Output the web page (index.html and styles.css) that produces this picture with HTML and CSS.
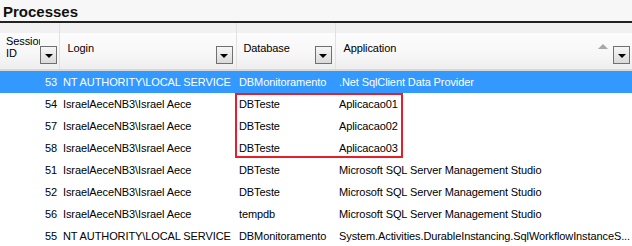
FILE: index.html
```html
<!DOCTYPE html>
<html lang="en">
<head>
    <meta charset="UTF-8">
    <title>Processes</title>
    <link rel="stylesheet" href="styles.css">
</head>
<body>
    <div class="panel">
        <div class="title">Processes</div>
        <div class="grid-wrap">
            <table class="grid">
                <colgroup>
                    <col class="c-session">
                    <col class="c-login">
                    <col class="c-db">
                    <col class="c-app">
                </colgroup>
                <thead>
                    <tr>
                        <th>
                            <div class="head-cell">
                                <span class="head-text session-text">Session ID</span>
                                <span class="drop"></span>
                            </div>
                        </th>
                        <th>
                            <div class="head-cell">
                                <span class="head-text">Login</span>
                                <span class="drop"></span>
                            </div>
                        </th>
                        <th>
                            <div class="head-cell">
                                <span class="head-text">Database</span>
                                <span class="drop"></span>
                            </div>
                        </th>
                        <th>
                            <div class="head-cell">
                                <span class="head-text">Application</span>
                                <span class="sort-up"></span>
                                <span class="drop"></span>
                            </div>
                        </th>
                    </tr>
                </thead>
                <tbody>
                    <tr class="selected">
                        <td class="num">53</td>
                        <td>NT AUTHORITY\LOCAL SERVICE</td>
                        <td>DBMonitoramento</td>
                        <td>.Net SqlClient Data Provider</td>
                    </tr>
                    <tr>
                        <td class="num">54</td>
                        <td>IsraelAeceNB3\Israel Aece</td>
                        <td>DBTeste</td>
                        <td>Aplicacao01</td>
                    </tr>
                    <tr>
                        <td class="num">57</td>
                        <td>IsraelAeceNB3\Israel Aece</td>
                        <td>DBTeste</td>
                        <td>Aplicacao02</td>
                    </tr>
                    <tr>
                        <td class="num">58</td>
                        <td>IsraelAeceNB3\Israel Aece</td>
                        <td>DBTeste</td>
                        <td>Aplicacao03</td>
                    </tr>
                    <tr>
                        <td class="num">51</td>
                        <td>IsraelAeceNB3\Israel Aece</td>
                        <td>DBTeste</td>
                        <td>Microsoft SQL Server Management Studio</td>
                    </tr>
                    <tr>
                        <td class="num">52</td>
                        <td>IsraelAeceNB3\Israel Aece</td>
                        <td>DBTeste</td>
                        <td>Microsoft SQL Server Management Studio</td>
                    </tr>
                    <tr>
                        <td class="num">56</td>
                        <td>IsraelAeceNB3\Israel Aece</td>
                        <td>tempdb</td>
                        <td>Microsoft SQL Server Management Studio</td>
                    </tr>
                    <tr>
                        <td class="num">55</td>
                        <td>NT AUTHORITY\LOCAL SERVICE</td>
                        <td>DBMonitoramento</td>
                        <td>System.Activities.DurableInstancing.SqlWorkflowInstanceS...</td>
                    </tr>
                </tbody>
            </table>
            <div class="highlight"></div>
        </div>
    </div>
</body>
</html>
```

FILE: styles.css
```css
body {
    margin: 0;
    padding: 0;
    background-color: white;
    font-family: "Liberation Sans", Arial, sans-serif;
    overflow: hidden;
}

.panel {
    width: 632px;
}

.title {
    height: 23px;
    box-sizing: border-box;
    padding: 2px 0 0 3px;
    font-size: 15px;
    font-weight: bold;
    line-height: 19px;
    color: #111;
    background-color: #f7f7f7;
    border-bottom: 2px solid #222;
}

.grid-wrap {
    position: relative;
}

.grid {
    width: 632px;
    border-collapse: collapse;
    table-layout: fixed;
    font-size: 11px;
    letter-spacing: -0.1px;
}

.c-session { width: 59px; }
.c-login { width: 177px; }
.c-db { width: 99px; }

.grid th {
    height: 46px;
    padding: 0;
    font-weight: normal;
    text-align: left;
    vertical-align: top;
    border-right: 1px solid #e2e2e2;
    border-bottom: 2px solid #d8d8d8;
    background: linear-gradient(to bottom, #f1f1f1 0, #f1f1f1 10px, #fcfcfc 10px, #f7f7f7 30px, #efefef 44px);
}

.grid th:last-child {
    border-right: none;
}

.head-cell {
    display: flex;
    align-items: flex-end;
    height: 44px;
    box-sizing: border-box;
    padding: 0 2px 3px 6px;
    position: relative;
}

.head-text {
    flex: 1;
    align-self: center;
    padding-top: 8px;
    color: #000;
    line-height: 12px;
    white-space: nowrap;
}

.session-text {
    flex: none;
    width: 34px;
    white-space: normal;
    overflow: hidden;
    line-height: 12px;
    padding-top: 7px;
}

.grid th:nth-child(2) .head-cell {
    padding-left: 8px;
    padding-right: 3px;
}

.grid th:nth-child(3) .head-cell {
    padding-left: 7px;
    padding-right: 3px;
}

.grid th:nth-child(4) .head-cell {
    padding-left: 8px;
}

.drop {
    flex: none;
    width: 17px;
    height: 18px;
    box-sizing: border-box;
    border: 1px solid #707070;
    background: linear-gradient(to bottom, #f6f6f6, #dadada);
    display: flex;
    align-items: center;
    justify-content: center;
    margin-left: auto;
}

.drop::after {
    content: "";
    margin-top: 2px;
    border-left: 4px solid transparent;
    border-right: 4px solid transparent;
    border-top: 4px solid #000;
}

.sort-up {
    position: absolute;
    right: 24px;
    top: 21px;
    border-left: 5px solid transparent;
    border-right: 5px solid transparent;
    border-bottom: 5px solid #a8a8a8;
}

.grid td {
    height: 21px;
    padding: 1px 0 0 3px;
    line-height: 21px;
    color: #000;
    white-space: nowrap;
    overflow: hidden;
}

.grid td:nth-child(2),
.grid td:nth-child(4) {
    padding-left: 4px;
}

.grid td.num {
    text-align: right;
    padding: 1px 2px 0 0;
}

.grid tr.selected td {
    background-color: #3399ff;
    color: white;
}

.highlight {
    position: absolute;
    left: 235px;
    top: 70px;
    width: 168px;
    height: 65px;
    box-sizing: border-box;
    border: 2px solid #e5202a;
    pointer-events: none;
}
```
